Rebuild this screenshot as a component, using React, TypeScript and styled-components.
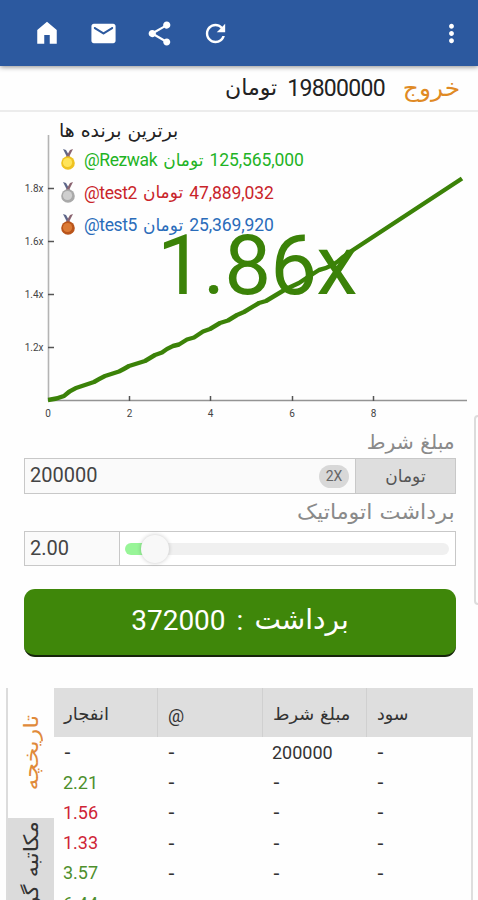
import React from "react";
import styled, { createGlobalStyle } from "styled-components";

const Global = createGlobalStyle`
  * { box-sizing: border-box; }
  html, body { margin: 0; background: #fefefe; }
  body { font-family: Roboto, "DejaVu Sans", sans-serif; color: #222; overflow: hidden; }
`;

const Page = styled.div`
  position: relative;
  width: 478px;
  height: 900px;
  overflow: hidden;
  background: #fefefe;
`;

const AppBar = styled.header`
  position: relative;
  z-index: 1;
  height: 66px;
  padding: 0 10px 0 30px;
  display: flex;
  align-items: center;
  gap: 22px;
  background: #2c599f;
  box-shadow: 0 1px 5px rgba(0, 0, 0, 0.45);
`;

const IconButton = styled.button<{ $end?: boolean }>`
  width: 34px;
  height: 34px;
  padding: 0;
  border: 0;
  background: none;
  display: flex;
  align-items: center;
  justify-content: center;
  margin-left: ${(p) => (p.$end ? "auto" : "0")};
`;

const Glyph = styled.svg`
  display: block;
  flex: none;
  fill: #fff;
`;

const Fa = styled.span<{ $size: number; $stretch?: number; $origin?: string }>`
  display: inline-block;
  font-family: "DejaVu Sans", sans-serif;
  font-size: ${(p) => p.$size}px;
  line-height: 1;
  white-space: nowrap;
  transform: scaleX(${(p) => p.$stretch ?? 1});
  transform-origin: ${(p) => p.$origin ?? "center"};
`;

const BalanceBar = styled.div`
  direction: rtl;
  height: 46px;
  padding: 0 18px 0 0;
  display: flex;
  align-items: center;
  gap: 18px;
  border-bottom: 2px solid #ececec;
  font-size: 23px;
  color: #222;
`;

const Logout = styled.a`
  color: #e08a24;
  width: 57px;
`;

const Balance = styled.div`
  display: flex;
  align-items: center;
  gap: 10px;
`;

const BalanceValue = styled.span`
  letter-spacing: -0.7px;
`;

const ChartArea = styled.section`
  position: relative;
  height: 314px;
`;

const ChartSvg = styled.svg`
  display: block;
`;

const Leaders = styled.div`
  position: absolute;
  left: 58px;
  top: 6px;
`;

const LeadersTitle = styled.div`
  height: 26px;
  padding-left: 1px;
  display: flex;
  align-items: center;
`;

const Leader = styled.div<{ $color: string }>`
  height: 32.5px;
  display: flex;
  align-items: center;
  gap: 6px;
  font-size: 17.5px;
  letter-spacing: -0.1px;
  color: ${(p) => p.$color};
`;

const LeaderName = styled.span`
  letter-spacing: -0.4px;
`;

const Medal = styled.svg`
  width: 20px;
  height: 22px;
`;

const Multiplier = styled.div`
  position: absolute;
  left: 157px;
  top: 104px;
  font-size: 83.5px;
  line-height: 100px;
  letter-spacing: -0.9px;
  color: #3b8208;
`;

const Form = styled.form`
  width: 432px;
  margin-left: 24px;
`;

const Label = styled.div<{ $height: number }>`
  direction: rtl;
  height: ${(p) => p.$height}px;
  padding-right: 1px;
  display: flex;
  align-items: center;
  color: #8a8a8a;
`;

const AmountRow = styled.div`
  height: 36px;
  display: flex;
  border: 1px solid #c8c8c8;
  background: #fafafa;
  font-size: 20px;
  color: #444;
`;

const Value = styled.div<{ $width?: number }>`
  width: ${(p) => (p.$width ? `${p.$width}px` : "auto")};
  flex: ${(p) => (p.$width ? "none" : 1)};
  padding: 0 0 2px 5px;
  display: flex;
  align-items: center;
  border-right: ${(p) => (p.$width ? "1px solid #c8c8c8" : "0")};
  background: #fafafa;
  line-height: 30px;
`;

const Double = styled.button`
  align-self: center;
  width: 30px;
  height: 23px;
  margin-right: 6px;
  padding: 0;
  border: 0;
  border-radius: 12px;
  background: #d8d8d8;
  color: #666;
  font: 14px Roboto, sans-serif;
`;

const Unit = styled.div`
  width: 100px;
  display: flex;
  align-items: center;
  justify-content: center;
  border-left: 1px solid #c8c8c8;
  background: #dedede;
  color: #555;
`;

const AutoRow = styled(AmountRow)`
  height: 35px;
  background: #fff;
`;

const Track = styled.div`
  position: relative;
  flex: 1;
  height: 12px;
  margin: 11px 6px 0 5px;
  border-radius: 6px;
  background: linear-gradient(90deg, #98f598 0 22px, #f0f0f0 22px);
`;

const Thumb = styled.div`
  position: absolute;
  left: 16px;
  top: -8px;
  width: 28px;
  height: 28px;
  border-radius: 50%;
  background: #f8f8f8;
  box-shadow: 0 0 4px rgba(0, 0, 0, 0.22);
`;

const Cashout = styled.button`
  direction: rtl;
  width: 432px;
  height: 68px;
  margin: 23px 0 0;
  padding: 0 0 4px;
  display: flex;
  align-items: center;
  justify-content: center;
  gap: 11px;
  border: 0;
  border-bottom: 2px solid #16240b;
  border-radius: 11px;
  background: #3f870a;
  color: #fff;
  font: 28px Roboto, sans-serif;
`;

const Panel = styled.section`
  display: flex;
  width: 467px;
  height: 212px;
  margin: 31px 0 0 6px;
  border-left: 2px solid #dcdcdc;
  border-right: 2px solid #dedede;
`;

const TabStrip = styled.div`
  width: 46px;
  display: flex;
  flex-direction: column;
`;

const Tab = styled.div<{ $active?: boolean; $height: number; $pad: number }>`
  height: ${(p) => p.$height}px;
  padding-top: ${(p) => p.$pad}px;
  flex: none;
  display: flex;
  justify-content: center;
  align-items: flex-start;
  background: ${(p) => (p.$active ? "#fefefe" : "#dbdbdb")};
  color: ${(p) => (p.$active ? "#e08a3a" : "#333")};
`;

const TabText = styled.span<{ $stretch: number }>`
  writing-mode: vertical-rl;
  transform: rotate(180deg) scaleY(${(p) => p.$stretch});
  transform-origin: center;
  font-family: "DejaVu Sans", sans-serif;
  font-size: 20px;
  line-height: 26px;
  white-space: nowrap;
`;

const Table = styled.div`
  flex: 1;
  overflow: hidden;
`;

const Row = styled.div<{ $head?: boolean }>`
  display: grid;
  grid-template-columns: 104px 105px 104px 1fr;
  height: ${(p) => (p.$head ? 49 : 30.2)}px;
  background: ${(p) => (p.$head ? "#dedede" : "transparent")};
  font-size: 18px;
`;

const Cell = styled.div<{ $color?: string; $head?: boolean }>`
  padding: ${(p) => (p.$head ? "5px 0 0 10px" : "0 0 0 9px")};
  display: flex;
  align-items: center;
  color: ${(p) => p.$color ?? "#333"};
  border-right: ${(p) => (p.$head ? "1px solid #d0d0d0" : "1px solid transparent")};
  &:last-child { border-right: 0; }
`;

const Dash = styled.span`
  padding-left: 1px;
  font-family: "DejaVu Sans", sans-serif;
  font-size: 19px;
  line-height: 20px;
`;

const SideHandle = styled.div`
  position: absolute;
  left: 474px;
  top: 415px;
  width: 10px;
  height: 190px;
  border: 2px solid #dcdcdc;
  border-radius: 4px;
`;

const leaders = [
  { name: "@Rezwak", amount: "125,565,000", color: "#1fb325", coin: "#efc321", shine: "#ffe45a" },
  { name: "@test2", amount: "47,889,032", color: "#c9242a", coin: "#a9a9a9", shine: "#cfcfcf" },
  { name: "@test5", amount: "25,369,920", color: "#2a6cba", coin: "#b9541a", shine: "#dc7a35" },
];

const GREEN = "#4d8f2c";
const RED = "#cf2436";
const rows = [
  { v: "-", bet: "200000" },
  { v: "2.21", color: GREEN, bet: "-" },
  { v: "1.56", color: RED, bet: "-" },
  { v: "1.33", color: RED, bet: "-" },
  { v: "3.57", color: GREEN, bet: "-" },
  { v: "6.44", color: GREEN, bet: "-" },
];

function Icon({ d, size }: { d: string; size: number }) {
  return (
    <Glyph width={size} height={size} viewBox="0 0 24 24">
      <path d={d} />
    </Glyph>
  );
}

function Entry({ value }: { value: string }) {
  return value === "-" ? <Dash>-</Dash> : <span>{value}</span>;
}

function Chart() {
  return (
    <ChartSvg width="478" height="314" viewBox="0 112 478 314">
      <path d="M48.500 135V401" stroke="#b4b4b4" strokeWidth="1.600" fill="none" />
      <path d="M48 400.500H467" stroke="#949494" strokeWidth="1.400" fill="none" />
      <g stroke="#555" strokeWidth="1.500">
        {[188.5, 241.5, 294.5, 347.5].map((y) => (
          <path key={y} d={`M48 ${y}h6`} />
        ))}
        {[129.5, 210.5, 292.5, 373.5].map((x) => (
          <path key={x} d={`M${x} 396v5`} />
        ))}
      </g>
      <g fontFamily="Roboto" fontSize="10" fill="#444" textAnchor="end">
        <text x="43.500" y="192">1.8x</text>
        <text x="43.500" y="245">1.6x</text>
        <text x="43.500" y="298">1.4x</text>
        <text x="43.500" y="351">1.2x</text>
      </g>
      <g fontFamily="Roboto" fontSize="10" fill="#444" textAnchor="middle">
        <text x="48" y="417">0</text>
        <text x="129.500" y="417">2</text>
        <text x="210.500" y="417">4</text>
        <text x="292" y="417">6</text>
        <text x="373.500" y="417">8</text>
      </g>
      <path
        d="M48 400Q57 399 64 396Q69 391 76 388L94 382Q99 379 105 376L119 371.500Q124 369 129 366L145 361Q150 358 155 355L162 352.500Q168 348 173 346L179 344.500L187 339.500L194 337.500L203 331.500L210 329L220 323L228 320.500L237 315L244 312L259 303L266 301L286 289L299 283L308 277L319 270Q333 267 343 257L353 250L462 178.500"
        fill="none"
        stroke="#3b8208"
        strokeWidth="4.400"
        strokeLinejoin="round"
      />
    </ChartSvg>
  );
}

export default function App() {
  return (
    <Page>
      <Global />
      <AppBar>
        <IconButton><Icon size={30} d="M4.200 20.500V9.500L12 3l7.800 6.500v11h-5.600v-7H9.800v7z" /></IconButton>
        <IconButton><Icon size={29} d="M20 4H4c-1.100 0-1.990.9-1.990 2L2 18c0 1.100.9 2 2 2h16c1.100 0 2-.9 2-2V6c0-1.100-.9-2-2-2zm-.4 4.250l-7.070 4.420c-.32.2-.74.2-1.060 0L4.400 8.250c-.25-.16-.4-.43-.4-.72 0-.67.73-1.070 1.300-.72L12 11l6.700-4.190c.57-.35 1.300.05 1.300.72 0 .29-.15.560-.4.720z" /></IconButton>
        <IconButton><Icon size={29} d="M18 16.080c-.76 0-1.440.3-1.960.77L8.910 12.700c.05-.23.09-.46.09-.7s-.04-.47-.09-.7l7.050-4.110c.54.5 1.250.81 2.040.81 1.660 0 3-1.340 3-3s-1.340-3-3-3-3 1.340-3 3c0 .24.04.47.09.7L8.040 9.810C7.500 9.310 6.790 9 6 9c-1.660 0-3 1.340-3 3s1.340 3 3 3c.79 0 1.500-.31 2.040-.81l7.120 4.160c-.05.21-.08.43-.08.65 0 1.610 1.310 2.920 2.920 2.920s2.920-1.310 2.920-2.920-1.310-2.920-2.920-2.920z" /></IconButton>
        <IconButton><Icon size={29} d="M17.650 6.350C16.200 4.900 14.210 4 12 4c-4.420 0-7.990 3.580-7.990 8s3.570 8 7.990 8c3.730 0 6.840-2.550 7.730-6h-2.080c-.82 2.330-3.040 4-5.650 4-3.310 0-6-2.690-6-6s2.690-6 6-6c1.660 0 3.140.69 4.220 1.780L13 11h7V4l-2.350 2.350z" /></IconButton>
        <IconButton $end><Icon size={29} d="M12 8c1.100 0 2-.9 2-2s-.9-2-2-2-2 .9-2 2 .9 2 2 2zm0 2c-1.100 0-2 .9-2 2s.9 2 2 2 2-.9 2-2-.9-2-2-2zm0 6c-1.100 0-2 .9-2 2s.9 2 2 2 2-.9 2-2-.9-2-2-2z" /></IconButton>
      </AppBar>

      <BalanceBar>
        <Logout><Fa $size={24} $stretch={1.04} $origin="right">خروج</Fa></Logout>
        <Balance>
          <BalanceValue>19800000</BalanceValue>
          <Fa $size={22} $origin="right">تومان</Fa>
        </Balance>
      </BalanceBar>

      <ChartArea>
        <Chart />
        <Multiplier>1.86x</Multiplier>
        <Leaders>
          <LeadersTitle><Fa $size={18.5} $stretch={1.02} $origin="left">برترین برنده ها</Fa></LeadersTitle>
          {leaders.map((l) => (
            <Leader key={l.name} $color={l.color}>
              <Medal viewBox="0 0 20 22">
                <path d="M5 0l4 8h3L8 1z" fill="#5d6689" />
                <path d="M15 0l-4 8H8l4-7z" fill="#8a6470" />
                <circle cx="10" cy="14" r="6.800" fill={l.coin} />
                <circle cx="9.500" cy="13.500" r="4.600" fill={l.shine} />
              </Medal>
              <LeaderName>{l.name}</LeaderName>
              <Fa $size={17}>تومان</Fa>
              <span>{l.amount}</span>
            </Leader>
          ))}
        </Leaders>
      </ChartArea>

      <Form>
        <Label $height={32}><Fa $size={20} $stretch={1.015} $origin="right">مبلغ شرط</Fa></Label>
        <AmountRow>
          <Value>200000</Value>
          <Double type="button">2X</Double>
          <Unit><Fa $size={17}>تومان</Fa></Unit>
        </AmountRow>
        <Label $height={37}><Fa $size={21} $stretch={1.06} $origin="right">برداشت اتوماتیک</Fa></Label>
        <AutoRow>
          <Value $width={95}>2.00</Value>
          <Track><Thumb /></Track>
        </AutoRow>
        <Cashout type="button">
          <Fa $size={28}>برداشت</Fa>
          <span>:</span>
          <span>372000</span>
        </Cashout>
      </Form>

      <Panel>
        <TabStrip>
          <Tab $active $height={130} $pad={33}><TabText $stretch={1.19}>تاریخچه</TabText></Tab>
          <Tab $height={140} $pad={10}><TabText $stretch={1.12}>مکاتبه گروهی</TabText></Tab>
        </TabStrip>
        <Table>
          <Row $head>
            <Cell $head><Fa $size={17.5} $stretch={1.03} $origin="left">انفجار</Fa></Cell>
            <Cell $head>@</Cell>
            <Cell $head><Fa $size={17.5} $stretch={1.02} $origin="left">مبلغ شرط</Fa></Cell>
            <Cell $head><Fa $size={17.5} $origin="left">سود</Fa></Cell>
          </Row>
          {rows.map((r, i) => (
            <Row key={i}>
              <Cell $color={r.color}><Entry value={r.v} /></Cell>
              <Cell><Entry value="-" /></Cell>
              <Cell><Entry value={r.bet} /></Cell>
              <Cell><Entry value="-" /></Cell>
            </Row>
          ))}
        </Table>
      </Panel>
      <SideHandle />
    </Page>
  );
}
